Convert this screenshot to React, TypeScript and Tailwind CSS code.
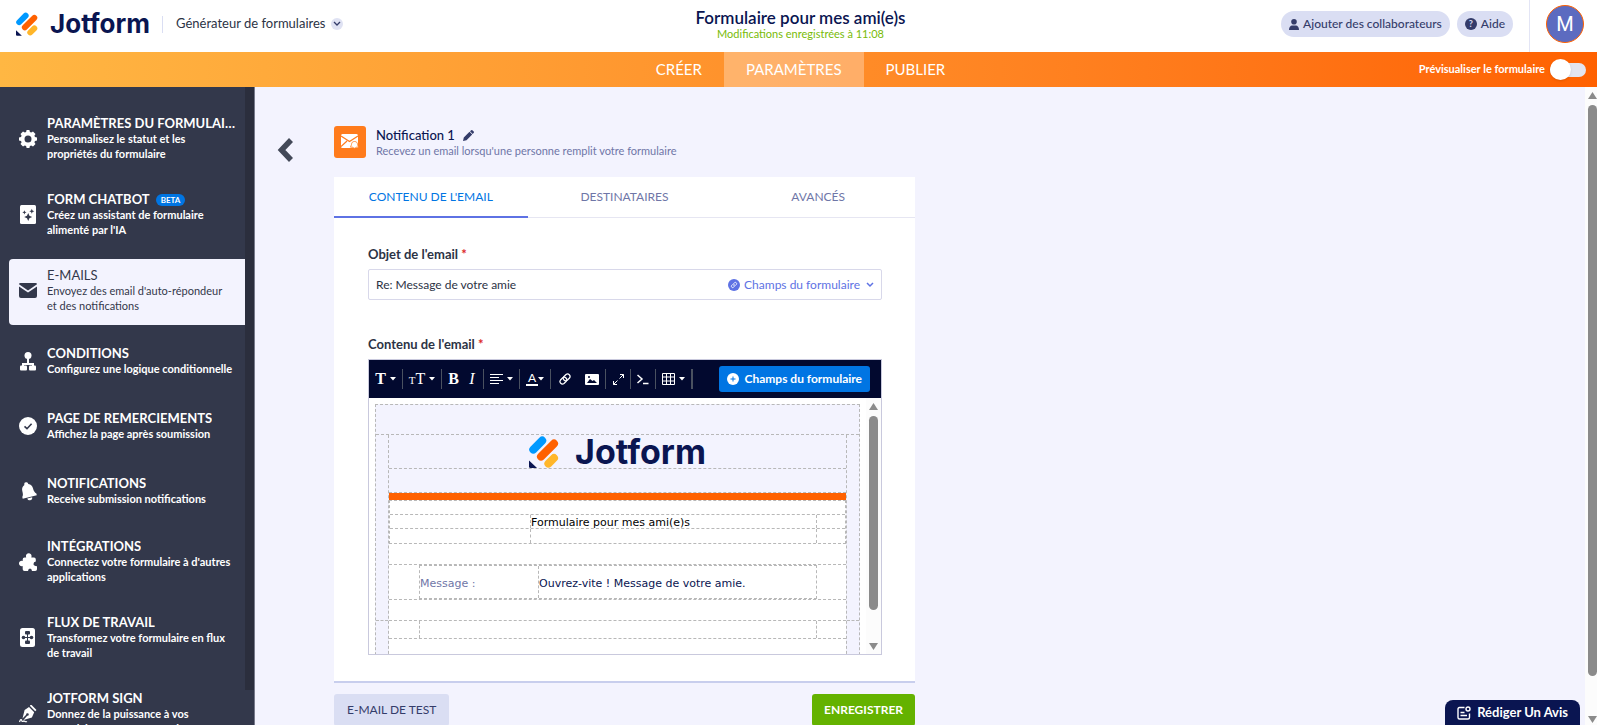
import { ReactNode, useCallback, useState } from "react";

type MenuItem = {
  title: string;
  text: string;
  icon: ReactNode;
  badge?: string;
};

const LogoMark = ({ className }: { className: string }) => (
  <svg viewBox="0 0 30 32" className={className} aria-hidden="true">
    <g strokeLinecap="round" strokeWidth="8" fill="none">
      <path d="M4.3 13.6 L13.2 4.6" stroke="#0099ff" />
      <path d="M12 20.6 L25 7.6" stroke="#ff6100" />
      <path d="M19.4 27.6 L25 22" stroke="#ffb629" />
    </g>
    <path d="M0 24.6 L8 32 H1.5 Q0 32 0 30.5 Z" fill="#0a1551" />
  </svg>
);

const Caret = () => (
  <svg viewBox="0 0 6 4" className="h-1 w-1.5 shrink-0" aria-hidden="true">
    <path d="M0 0 H6 L3 3.5 Z" fill="currentColor" />
  </svg>
);

const Separator = () => <span className="h-5 w-px shrink-0 bg-[#4a5160]" />;

const icons = {
  gear: (
    <svg viewBox="0 0 18 18" className="w-[18px]">
      <path
        fill="currentColor"
        fillRule="evenodd"
        d="M7.6 0h2.8l.5 2 1.3.6L14 1.5l2.500 2.500-1.100 1.800.6 1.300 2 .5v2.800l-2 .5-.6 1.300 1.100 1.800-2.500 2.500-1.800-1.100-1.300.6-.5 2H7.600l-.5-2-1.300-.6L4 16.500 1.500 14l1.100-1.800-.6-1.300-2-.5V7.600l2-.5.600-1.300L1.500 4 4 1.500l1.800 1.100 1.300-.6zM9 5.500a3.500 3.500 0 100 7 3.500 3.500 0 000-7z"
      />
    </svg>
  ),
  sparkle: (
    <svg viewBox="0 0 16 19" className="w-4">
      <rect width="16" height="19" rx="1.5" fill="currentColor" />
      <g fill="#33384b">
        <path d="M8.2 8l1.200 2.800 2.800 1.200-2.800 1.200-1.200 2.800-1.200-2.800-2.800-1.200 2.800-1.200z" />
        <path d="M11.800 3.700l.7 1.800 1.800.7-1.800.7-.7 1.800-.7-1.800-1.800-.7 1.800-.7z" />
        <path d="M4.400 5.200l.6 1.500 1.500.6-1.500.6-.6 1.500-.6-1.500-1.500-.6 1.500-.6z" />
      </g>
    </svg>
  ),
  mail: (
    <svg viewBox="0 0 18 15" className="w-[18px]">
      <path
        fill="currentColor"
        d="M1.5 0h15Q18 0 18 1.3L9 7.6 0 1.3Q0 0 1.5 0zM0 3.400l9 6.200 9-6.200V13q0 2-2 2H2q-2 0-2-2z"
      />
    </svg>
  ),
  tree: (
    <svg viewBox="0 0 18 19" className="w-[18px]">
      <circle cx="9" cy="3.5" r="3.5" fill="currentColor" />
      <path
        d="M9 6v6M4 14.500v-2.500h10v2.500"
        fill="none"
        stroke="currentColor"
        strokeWidth="2"
      />
      <rect x="1" y="13.5" width="7" height="5" rx="1" fill="currentColor" />
      <rect x="10" y="13.5" width="7" height="5" rx="1" fill="currentColor" />
    </svg>
  ),
  check: (
    <svg viewBox="0 0 18 18" className="w-[18px]">
      <circle cx="9" cy="9" r="9" fill="currentColor" />
      <path
        d="M5.5 9.300l2.500 2.400 4.600-5"
        fill="none"
        stroke="#33384b"
        strokeWidth="1.6"
      />
    </svg>
  ),
  bell: (
    <svg viewBox="0 0 18 19" className="w-[18px]">
      <g transform="rotate(-14 9 9)" fill="currentColor">
        <path d="M9 0a2 2 0 012 2.200c2.600 1 3.500 3 3.500 5.300 0 3 .6 4.500 2 6v1.800H2v-1.800c1.300-1.500 1.500-3 1.500-6 0-2.300 1-4.300 3.500-5.300A2 2 0 019 0z" />
        <path d="M6.5 16h5a2.500 2.500 0 01-5 0z" />
      </g>
    </svg>
  ),
  puzzle: (
    <svg viewBox="0 0 18 18" className="w-[18px]">
      <path
        fill="currentColor"
        d="M7 3.500a2.800 2.800 0 115.500 0q0 .7-.2 1.100H15q1.800 0 1.800 1.800v2.200q-2.300.4-2.300 2.300 0 2 3.500 2.300v3Q18 18 16.200 18H13q-.2-2.600-2-2.600T9 18H5.500q-1.800 0-1.800-1.800V13A2.600 2.600 0 010 10.500 2.600 2.600 0 013.700 8V6.400q0-1.800 1.800-1.800h1.700Q7 4.200 7 3.500z"
      />
    </svg>
  ),
  flow: (
    <svg viewBox="0 0 15 19" className="w-[15px]">
      <rect width="15" height="19" rx="2.5" fill="currentColor" />
      <g fill="#33384b">
        <rect x="5" y="3" width="5" height="3.5" rx="1" />
        <rect x="5" y="12.5" width="5" height="3.5" rx="1" />
        <circle cx="3.5" cy="9.500" r="1.8" />
        <circle cx="11.5" cy="9.500" r="1.8" />
      </g>
      <path d="M7.5 6v7M4 9.500h7" stroke="#33384b" strokeWidth="1" />
    </svg>
  ),
  pen: (
    <svg viewBox="0 0 18 18" className="w-[18px]">
      <path
        fill="currentColor"
        d="M11.3 0l1-.3 5.200 5.200-1.300 1.300-5.200-5.200zM10 2l5.200 5.200-2.300 5.300L4.500 15l3.700-4.200a1.300 1.300 0 10-1-1L3.500 13.500 5.600 5z"
      />
      <path
        d="M.5 17c1-3 2-3 2.200-1.500s1.300 1 2 .5 1.300 1.500 3.300.5"
        fill="none"
        stroke="currentColor"
        strokeWidth="1.2"
      />
    </svg>
  ),
};

const menuItems: MenuItem[] = [
  {
    title: "PARAMÈTRES DU FORMULAIRE",
    text: "Personnalisez le statut et les\npropriétés du formulaire",
    icon: icons.gear,
  },
  {
    title: "FORM CHATBOT",
    text: "Créez un assistant de formulaire\nalimenté par l'IA",
    icon: icons.sparkle,
    badge: "BETA",
  },
  {
    title: "E-MAILS",
    text: "Envoyez des email d'auto-répondeur\net des notifications",
    icon: icons.mail,
  },
  {
    title: "CONDITIONS",
    text: "Configurez une logique conditionnelle",
    icon: icons.tree,
  },
  {
    title: "PAGE DE REMERCIEMENTS",
    text: "Affichez la page après soumission",
    icon: icons.check,
  },
  {
    title: "NOTIFICATIONS",
    text: "Receive submission notifications",
    icon: icons.bell,
  },
  {
    title: "INTÉGRATIONS",
    text: "Connectez votre formulaire à d'autres\napplications",
    icon: icons.puzzle,
  },
  {
    title: "FLUX DE TRAVAIL",
    text: "Transformez votre formulaire en flux\nde travail",
    icon: icons.flow,
  },
  {
    title: "JOTFORM SIGN",
    text: "Donnez de la puissance à vos\nformulaires avec Jotform Sign",
    icon: icons.pen,
  },
];

const Header = () => (
  <header className="grid h-[52px] shrink-0 grid-cols-[1fr_auto_1fr] bg-white">
    <div className="flex items-center pl-4 pb-1">
      <a href="#" className="flex items-center gap-3">
        <LogoMark className="h-6 w-[22px]" />
        <span className="font-[Inter] text-[26px] leading-8 font-bold text-[#0a1551]">
          Jotform
        </span>
      </a>
      <span className="ml-3 h-[17px] w-px bg-[#dadef3]" />
      <button className="ml-[13px] flex items-center gap-1.5 text-[13px] text-[#2c3345]">
        Générateur de formulaires
        <span className="flex h-3 w-3 items-center justify-center rounded-full bg-[#dfe2f3]">
          <svg viewBox="0 0 8 6" className="w-2">
            <path
              d="M1 1l3 3 3-3"
              fill="none"
              stroke="#343c6a"
              strokeWidth="1.3"
            />
          </svg>
        </span>
      </button>
    </div>

    <div className="flex flex-col items-center pt-2 pl-1">
      <h1 className="text-[17px] leading-5 font-semibold text-[#0a1551]">
        Formulaire pour mes ami(e)s
      </h1>
      <p className="text-[11px] leading-3 text-[#78bb07]">
        Modifications enregistrées à 11:08
      </p>
    </div>

    <div className="flex justify-end">
      <div className="flex items-center gap-[7px] pr-4 pb-1">
        <button className="flex h-[26px] items-center gap-1 rounded-full bg-[#dadef3] px-2 text-xs font-medium text-[#343c6a]">
          <svg viewBox="0 0 10 11" className="w-2.5" fill="currentColor">
            <circle cx="5" cy="2.8" r="2.8" />
            <path d="M0 11c0-3 1.500-4.500 3-4.500h4c1.500 0 3 1.500 3 4.500z" />
          </svg>
          Ajouter des collaborateurs
        </button>
        <button className="flex h-[26px] items-center gap-1 rounded-full bg-[#dadef3] px-2 text-xs font-medium text-[#343c6a]">
          <span className="flex h-3 w-3 items-center justify-center rounded-full bg-[#343c6a] text-[9px] font-bold text-[#dadef3]">
            ?
          </span>
          Aide
        </button>
      </div>
      <div className="flex items-start border-l border-[#e3e5f5] pt-[5px] pr-[13px] pl-4">
        <button className="h-[38px] w-[38px] rounded-full border border-[#ff6100] bg-[#5c6bc0] font-[Roboto] text-xl text-white">
          M
        </button>
      </div>
    </div>
  </header>
);

const NavBar = () => {
  const [preview, setPreview] = useState(false);

  return (
    <nav className="grid h-[35px] shrink-0 grid-cols-[1fr_auto_1fr] bg-linear-to-r from-[#ffb743] to-[#ff6100] text-white">
      <div />
      <div className="flex pl-1 text-[15px] leading-[34px]">
        <a href="#" className="px-[22px]">
          CRÉER
        </a>
        <a href="#" className="bg-white/30 px-[22px]">
          PARAMÈTRES
        </a>
        <a href="#" className="px-[22px]">
          PUBLIER
        </a>
      </div>
      <label className="flex items-center justify-end gap-[5px] pr-[11px] text-[11px] font-bold">
        Prévisualiser le formulaire
        <input
          type="checkbox"
          checked={preview}
          onChange={(e) => setPreview(e.currentTarget.checked)}
          className="sr-only"
        />
        <span className="flex h-[21px] w-9 items-center">
          <span className="flex h-[14px] w-full items-center rounded-full bg-[#e3e5f0]">
            <span
              className={`h-[21px] w-[21px] rounded-full bg-white shadow ${
                preview ? "ml-auto" : ""
              }`}
            />
          </span>
        </span>
      </label>
    </nav>
  );
};

const Sidebar = () => {
  const [active, setActive] = useState("E-MAILS");

  return (
    <aside className="flex w-[255px] shrink-0 border-r border-[#777a8b] bg-[#33384b]">
      <div className="flex min-w-0 flex-1 flex-col gap-2.5 overflow-hidden pt-5 pl-[9px]">
        {menuItems.map((item) => (
          <button
            key={item.title}
            onClick={() => setActive(item.title)}
            className={`flex min-h-[55px] shrink-0 items-center gap-2.5 rounded-l pt-[9px] pb-3 pl-[9px] text-left ${
              active === item.title
                ? "bg-[#f3f3fe] text-[#33384b]"
                : "font-bold text-white"
            }`}
          >
            <span className="flex w-[19px] shrink-0 justify-center">
              {item.icon}
            </span>
            <span className="min-w-0 flex-1">
              <span className="flex items-center gap-1.5 pr-2">
                <span className="truncate text-[13px] leading-[15px]">
                  {item.title}
                </span>
                {item.badge && (
                  <span className="rounded-full bg-[#0075e3] px-[5px] text-[8px] leading-3 font-bold">
                    {item.badge}
                  </span>
                )}
              </span>
              <span className="block text-[11px] leading-[15px] whitespace-pre-line">
                {item.text}
              </span>
            </span>
          </button>
        ))}
      </div>
      <div className="w-[9px] shrink-0 pb-[35px]">
        <div className="h-full bg-[#2b2e3d]" />
      </div>
    </aside>
  );
};

const Toolbar = () => (
  <div className="flex h-[38px] items-center bg-[#02092f] text-white">
    <button className="flex h-6 w-[33px] items-center justify-center gap-1 font-['Liberation_Serif'] text-base font-bold">
      T
      <Caret />
    </button>
    <Separator />
    <button className="flex h-6 w-[38px] items-center justify-center gap-1 font-['Liberation_Serif']">
      <span className="text-base">
        <span className="text-[11px]">T</span>T
      </span>
      <Caret />
    </button>
    <Separator />
    <button className="h-6 w-[23px] font-['Liberation_Serif'] text-base font-bold">
      B
    </button>
    <button className="h-6 w-[18px] pr-1 font-['Liberation_Serif'] text-base italic">
      I
    </button>
    <Separator />
    <button
      aria-label="Alignement"
      className="flex h-6 w-[35px] items-center justify-center gap-1"
    >
      <svg viewBox="0 0 13 11" className="w-[13px]" stroke="currentColor">
        <path d="M0 .5h13M0 3.500h9M0 6.500h13M0 9.500h9" />
      </svg>
      <Caret />
    </button>
    <Separator />
    <button className="flex h-6 w-[30px] items-center justify-center">
      <span className="w-3 border-b-2 border-white text-xs leading-3">A</span>
      <Caret />
    </button>
    <Separator />
    <button
      aria-label="Lien"
      className="flex h-6 w-[27px] items-center justify-center"
    >
      <svg
        viewBox="0 0 24 24"
        className="w-3"
        fill="none"
        stroke="currentColor"
        strokeWidth="2.5"
      >
        <path d="M10 14a5 5 0 007 0l4-4a5 5 0 00-7-7l-4 4a5 5 0 000 7" />
        <path d="M14 10a5 5 0 00-7 0l-4 4a5 5 0 007 7l4-4a5 5 0 000-7" />
      </svg>
    </button>
    <button
      aria-label="Image"
      className="flex h-6 w-[27px] items-center justify-center"
    >
      <svg viewBox="0 0 14 11" className="w-3.5">
        <rect width="14" height="11" rx="1" fill="currentColor" />
        <path d="M2 9l3-4 2.500 2L9 6l3 3z" fill="#02092f" />
        <circle cx="4" cy="3" r="1" fill="#02092f" />
      </svg>
    </button>
    <Separator />
    <button
      aria-label="Plein écran"
      className="flex h-6 w-6 items-center justify-center"
    >
      <svg
        viewBox="0 0 11 11"
        className="w-[11px]"
        fill="none"
        stroke="currentColor"
      >
        <path d="M7 .5h3.500V4M10.500.5l-4 4M4 10.500H.5V7M.5 10.500l4-4" />
      </svg>
    </button>
    <Separator />
    <button
      aria-label="Code source"
      className="flex h-6 w-6 items-center justify-center"
    >
      <svg
        viewBox="0 0 12 11"
        className="w-3"
        fill="none"
        stroke="currentColor"
        strokeWidth="1.5"
      >
        <path d="M.5 1l4.500 4-4.500 4M6 9.500h5.500" />
      </svg>
    </button>
    <Separator />
    <button
      aria-label="Tableau"
      className="flex h-6 w-[35px] items-center justify-center gap-1"
    >
      <svg
        viewBox="0 0 13 12"
        className="w-[13px]"
        fill="none"
        stroke="currentColor"
      >
        <path d="M.5.5h12v11H.5zM.5 4h12M.5 8h12M4.500.5v11M8.500.5v11" />
      </svg>
      <Caret />
    </button>
    <span className="h-5 w-0.5 bg-[#4a5160]" />
    <button className="mr-[11px] ml-auto flex h-[26px] items-center gap-[5px] rounded-[3px] bg-[#0075e3] px-2 text-xs font-bold">
      <svg viewBox="0 0 12 12" className="w-3">
        <circle cx="6" cy="6" r="6" fill="#fff" />
        <path d="M6 3.500v5M3.500 6h5" stroke="#0075e3" />
      </svg>
      Champs du formulaire
    </button>
  </div>
);

const MailBody = () => (
  <div className="flex h-64 overflow-hidden bg-white font-['DejaVu_Sans',sans-serif] text-[11px] leading-[15px]">
    <div className="min-w-0 flex-1 overflow-hidden px-1.5 pt-1.5">
      <div className="border border-dashed border-[#b8b8b8] bg-[#f3f3fe]">
        <div className="h-[30px] border-b border-dashed border-[#b8b8b8]" />
        <div className="grid grid-cols-[12px_1fr_12px]">
          <div className="mt-[185px] h-[50px] border-t border-dashed border-[#b8b8b8]" />
          <div className="border-x border-dashed border-[#b8b8b8]">
            <div className="flex h-[34px] items-center justify-center gap-4 border-b border-dashed border-[#b8b8b8]">
              <LogoMark className="h-8 w-[30px]" />
              <span className="font-[Inter] text-[34px] leading-8 font-bold text-[#0a1551]">
                Jotform
              </span>
            </div>
            <div className="h-6 border-b border-dashed border-[#b8b8b8]" />
            <div className="h-[7px] bg-[#ff6100]" />
            <div className="border border-dashed border-[#b8b8b8] bg-white">
              <div className="h-[13px]" />
              <div className="grid grid-cols-[140px_1fr_28px] border-t border-dashed border-[#b8b8b8] text-black">
                <div />
                <div className="h-[13px] border-x border-dashed border-[#b8b8b8]">
                  Formulaire pour mes ami(e)s
                </div>
                <div />
              </div>
              <div className="grid h-[15px] grid-cols-[140px_1fr_28px] border-t border-dashed border-[#b8b8b8]">
                <div />
                <div className="border-x border-dashed border-[#b8b8b8]" />
                <div />
              </div>
            </div>
            <div className="bg-white">
              <div className="h-[21px] border-b border-dashed border-[#b8b8b8]" />
              <div className="grid grid-cols-[30px_1fr_29px] border-b border-dashed border-[#b8b8b8]">
                <div />
                <div className="grid h-[34px] grid-cols-[118px_1fr] grid-rows-[32px] border border-dashed border-[#b8b8b8] leading-9">
                  <div className="text-[#6f76a7]">Message :</div>
                  <div className="border-l border-dashed border-[#b8b8b8] text-[#0a1551]">
                    Ouvrez-vite ! Message de votre amie.
                  </div>
                </div>
                <div />
              </div>
              <div className="h-[21px] border-b border-dashed border-[#b8b8b8]" />
              <div className="grid h-[18px] grid-cols-[30px_1fr_29px] border-b border-dashed border-[#b8b8b8]">
                <div />
                <div className="border-x border-dashed border-[#b8b8b8]" />
                <div />
              </div>
              <div className="h-10" />
            </div>
          </div>
          <div className="mt-[185px] h-[50px] border-t border-dashed border-[#b8b8b8]" />
        </div>
      </div>
    </div>
    <div className="flex w-[15px] shrink-0 flex-col items-center bg-[#fcfcfc] pt-[5px] pb-1 text-[#8b8b8b]">
      <svg viewBox="0 0 9 7" className="h-[7px] w-[9px]">
        <path d="M4.5 0L9 7H0z" fill="currentColor" />
      </svg>
      <div className="mt-1.5 mb-[33px] w-[9px] flex-1 rounded-full bg-[#8b8b8b]" />
      <svg viewBox="0 0 9 7" className="h-[7px] w-[9px]">
        <path d="M4.5 7L9 0H0z" fill="currentColor" />
      </svg>
    </div>
  </div>
);

const tabs = ["CONTENU DE L'EMAIL", "DESTINATAIRES", "AVANCÉS"];

const EmailSettings = () => {
  const [tab, setTab] = useState(tabs[0]);
  const [subject, setSubject] = useState("Re: Message de votre amie");

  const onSubjectChange = useCallback(
    (e: React.ChangeEvent<HTMLInputElement>) => {
      setSubject(e.currentTarget.value);
    },
    []
  );

  return (
    <section className="w-[581px]">
      <div className="flex items-center gap-2.5">
        <span className="flex h-8 w-8 items-center justify-center rounded-[3px] bg-[#ff7b1c]">
          <svg viewBox="0 0 18 16" className="w-[18px]">
            <rect width="17" height="14" rx="1.5" fill="#fff" />
            <path
              d="M0 2l8.500 5.500L17 2M0 12.500L6 7"
              fill="none"
              stroke="#ff7b1c"
              strokeWidth="1.2"
            />
            <path
              d="M13.5 7.500c2 0 3 1.200 3 3l1 2.700h-2.500a1.600 1.600 0 01-3 0H9.500l1-2.700c0-1.800 1-3 3-3z"
              fill="#fff"
              stroke="#ff7b1c"
              strokeWidth=".8"
            />
          </svg>
        </span>
        <div className="pt-px">
          <h2 className="flex items-center gap-2 text-[13px] leading-4 font-medium text-[#0a1551]">
            Notification 1
            <button aria-label="Renommer">
              <svg viewBox="0 0 11 11" className="w-[11px]" fill="#343c6a">
                <path d="M0 11l.8-3.500L6.500 1.800l2.700 2.700-5.700 5.700zM7 1.300L8.200.2q.6-.4 1.200.1l1.300 1.300q.5.600.1 1.200L9.700 4z" />
              </svg>
            </button>
          </h2>
          <p className="text-[11px] leading-[15px] text-[#6f76a7]">
            Recevez un email lorsqu'une personne remplit votre formulaire
          </p>
        </div>
      </div>

      <div className="mt-[19px] border-b-2 border-[#c8ceed] bg-white">
        <div className="grid h-[41px] grid-cols-3" role="tablist">
          {tabs.map((name) => (
            <button
              key={name}
              role="tab"
              aria-selected={tab === name}
              onClick={() => setTab(name)}
              className={`text-xs ${
                tab === name
                  ? "border-b-2 border-[#5e72e4] text-[#0075e3]"
                  : "border-b border-[#e6e6f2] text-[#6f76a7]"
              }`}
            >
              {name}
            </button>
          ))}
        </div>

        <div className="pt-7 pr-[33px] pb-[26px] pl-[34px]">
          <label
            htmlFor="subject"
            className="block text-[13px] leading-4 font-bold text-[#2c3345]"
          >
            Objet de l'email <span className="text-[#dc2626]">*</span>
          </label>
          <div className="mt-[7px] flex h-[31px] items-center rounded-xs border border-[#d8d8ea] px-[7px]">
            <input
              id="subject"
              value={subject}
              onChange={onSubjectChange}
              className="min-w-0 flex-1 text-xs text-[#2c3345] outline-none"
            />
            <button className="flex items-center gap-1 text-xs text-[#5e72e4]">
              <svg viewBox="0 0 12 12" className="w-3">
                <circle cx="6" cy="6" r="6" fill="#5e72e4" />
                <g fill="none" stroke="#fff" strokeWidth=".9">
                  <path d="M5.300 6.700a1.300 1.300 0 001.800 0l1.300-1.300a1.300 1.300 0 00-1.800-1.800l-.7.700" />
                  <path d="M6.700 5.300a1.300 1.300 0 00-1.800 0L3.600 6.600a1.300 1.300 0 001.800 1.800l.7-.7" />
                </g>
              </svg>
              Champs du formulaire
              <svg viewBox="0 0 8 6" className="ml-0.5 w-2">
                <path
                  d="M1 1l3 3 3-3"
                  fill="none"
                  stroke="#5e72e4"
                  strokeWidth="1.5"
                />
              </svg>
            </button>
          </div>

          <h3 className="mt-9 text-[13px] leading-4 font-bold text-[#2c3345]">
            Contenu de l'email <span className="text-[#dc2626]">*</span>
          </h3>
          <div className="mt-[7px] border border-[#c9c9dd]">
            <Toolbar />
            <MailBody />
          </div>
        </div>
      </div>

      <div className="mt-[11px] flex justify-between text-xs">
        <button className="h-8 rounded-[3px] bg-[#dadef3] px-[13px] text-[#343c6a]">
          E-MAIL DE TEST
        </button>
        <button className="h-8 rounded-[3px] bg-[#64b200] px-3 font-bold text-white">
          ENREGISTRER
        </button>
      </div>
    </section>
  );
};

const App = () => {
  return (
    <div className="relative flex h-screen flex-col overflow-hidden bg-[#f3f3fe] font-[Lato,sans-serif]">
      <Header />
      <NavBar />
      <div className="flex min-h-0 flex-1">
        <Sidebar />
        <main className="flex min-w-0 flex-1 items-start gap-[41px] pt-[39px] pl-[22px]">
          <button aria-label="Retour" className="mt-3">
            <svg viewBox="0 0 16 24" className="h-6 w-4">
              <path
                d="M14 2L4.500 12l9.500 10"
                fill="none"
                stroke="#434958"
                strokeWidth="5.5"
              />
            </svg>
          </button>
          <EmailSettings />
        </main>
        <div className="flex w-3 shrink-0 flex-col items-end bg-[#fcfcfc] pt-[5px] pb-0.5 text-[#8b8b8b]">
          <svg viewBox="0 0 9 7" className="h-[7px] w-[9px]">
            <path d="M4.5 0L9 7H0z" fill="currentColor" />
          </svg>
          <div className="mt-1.5 mb-10 w-[9px] flex-1 rounded-full bg-[#8b8b8b]" />
          <svg viewBox="0 0 9 7" className="h-[7px] w-[9px]">
            <path d="M4.5 7L9 0H0z" fill="currentColor" />
          </svg>
        </div>
      </div>

      <button className="absolute right-[17px] bottom-0 flex h-[25px] items-center gap-1.5 rounded-t-lg bg-[#0a1551] px-3 text-[13px] font-bold text-white">
        <svg
          viewBox="0 0 14 14"
          className="w-3.5"
          fill="none"
          stroke="currentColor"
          strokeWidth="1.4"
        >
          <path d="M7.5 1.500H2.500Q1 1.500 1 3v8.500Q1 13 2.500 13H11q1.500 0 1.500-1.500V7.500M3.500 6.500h4M3.500 9.500h6.500" />
          <circle cx="11" cy="3" r="2" />
        </svg>
        Rédiger Un Avis
      </button>
    </div>
  );
};

export default App;
